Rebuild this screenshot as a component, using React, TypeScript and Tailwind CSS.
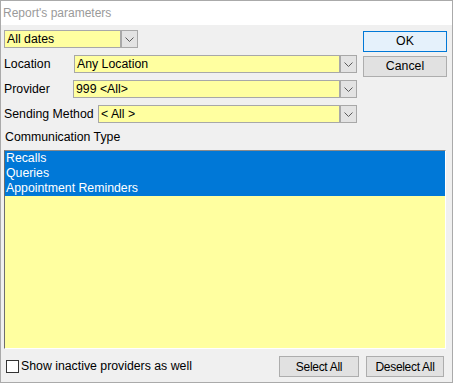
import React from "react";

const font = { fontFamily: '"Liberation Sans", Arial, sans-serif' };

function Chevron() {
  return (
    <svg width="9" height="5" viewBox="0 0 9 5" className="block">
      <path d="M0.5 0.5 L4.5 4.5 L8.5 0.5" fill="none" stroke="#5a5a5a" strokeWidth="1" />
    </svg>
  );
}

function Combo({ value, w }: { value: string; w: string }) {
  return (
    <div className={`flex h-[18px] border border-[#a8a8a8] bg-[#ffffa0] ${w}`}>
      <div className="flex flex-1 items-center pl-[2px] text-[12.3px] leading-none text-black">{value}</div>
      <div className="flex w-[17px] items-center justify-center border-l-2 border-[#a8a8a8] bg-[#e3e3e3]">
        <Chevron />
      </div>
    </div>
  );
}

function Row({ label, value, w }: { label: string; value: string; w: string }) {
  return (
    <div className="mt-[7px] flex h-[18px] items-center">
      <span className="text-[12.3px] leading-none text-black">{label}</span>
      <div className="ml-auto">
        <Combo value={value} w={w} />
      </div>
    </div>
  );
}

export default function App() {
  return (
    <div style={font} className="h-[383px] w-[453px] border border-[#aaaaaa] bg-[#f0f0f0] text-black">
      <div className="flex h-[24px] items-center bg-white pl-[2px] text-[12px] text-[#9a9a9a]">Report's parameters</div>
      <div className="pl-[3px] pr-[5px]">
        <div className="flex items-start">
          <div className="w-[353px]">
            <div className="pt-[5px]">
              <Combo value="All dates" w="w-[134px]" />
            </div>
            <Row label="Location" value="Any Location" w="w-[283px]" />
            <Row label="Provider" value="999 <All>" w="w-[284px]" />
            <Row label="Sending Method" value="< All >" w="w-[259px]" />
          </div>
          <div className="ml-[6px] w-[84px] pt-[6px]">
            <div className="flex h-[21px] items-center justify-center border border-[#0078d7] bg-[#e5f1fb] text-[12.3px]">OK</div>
            <div className="mt-[4px] flex h-[21px] items-center justify-center border border-[#adadad] bg-[#e1e1e1] text-[12.3px]">Cancel</div>
          </div>
        </div>
        <div className="mt-[7px] flex h-[14px] items-center pl-[1px] text-[12.3px] leading-none">Communication Type</div>
        <div className="mt-[6px] h-[199px] w-[442px] border border-t-[#8a8a8a] border-l-[#6e6e6e] border-r-[#ffffff] border-b-[#ffffff] bg-[#ffffa0]">
          {["Recalls", "Queries", "Appointment Reminders"].map((t) => (
            <div key={t} className="flex h-[15px] items-center bg-[#0078d7] pl-[1px] text-[12.3px] leading-none text-white">
              {t}
            </div>
          ))}
        </div>
        <div className="mt-[7px] flex h-[21px] items-center">
          <div className="ml-[2px] h-[13px] w-[13px] border border-[#333333] bg-white" />
          <span className="ml-[2px] text-[12.3px] leading-none">Show inactive providers as well</span>
          <div className="ml-auto flex gap-[7px] pr-[3px]">
            <div className="flex h-[21px] w-[80px] items-center justify-center border border-[#adadad] bg-[#e1e1e1] text-[12px] tracking-[-0.3px]">Select All</div>
            <div className="flex h-[21px] w-[78px] items-center justify-center border border-[#adadad] bg-[#e1e1e1] text-[12px] tracking-[-0.3px]">Deselect All</div>
          </div>
        </div>
      </div>
    </div>
  );
}
